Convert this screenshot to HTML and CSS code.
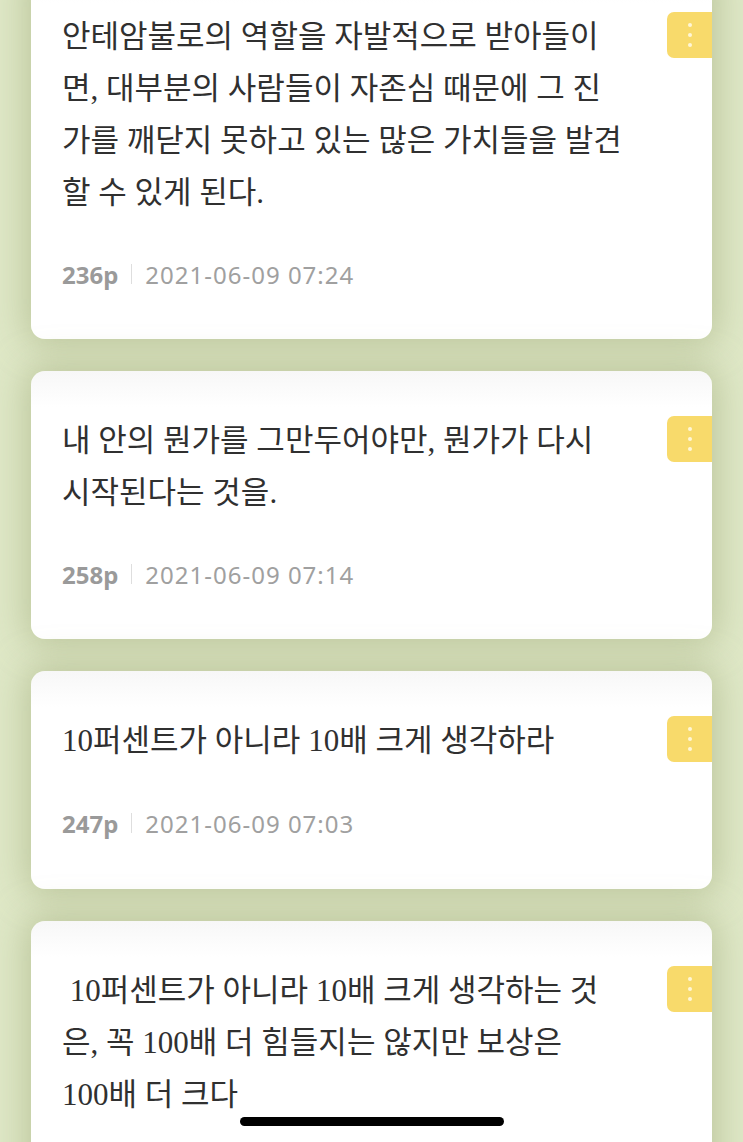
FILE: index.html
```html
<!DOCTYPE html>
<html lang="ko">
<head>
<meta charset="utf-8">
<title>밑줄 목록</title>
<link rel="stylesheet" href="styles.css">
</head>
<body>
<main class="list">
  <article class="card">
    <p class="quote">안테암불로의 역할을 자발적으로 받아들이면, 대부분의 사람들이 자존심 때문에 그 진가를 깨닫지 못하고 있는 많은 가치들을 발견할 수 있게 된다.</p>
    <div class="meta"><span class="page">236p</span><span class="sep"></span><span class="date">2021-06-09 07:24</span></div>
    <button class="more" aria-label="더보기"><i></i><i></i><i></i></button>
  </article>
  <article class="card">
    <p class="quote">내 안의 뭔가를 그만두어야만, 뭔가가 다시 시작된다는 것을.</p>
    <div class="meta"><span class="page">258p</span><span class="sep"></span><span class="date">2021-06-09 07:14</span></div>
    <button class="more" aria-label="더보기"><i></i><i></i><i></i></button>
  </article>
  <article class="card card-single">
    <p class="quote">10퍼센트가 아니라 10배 크게 생각하라</p>
    <div class="meta"><span class="page">247p</span><span class="sep"></span><span class="date">2021-06-09 07:03</span></div>
    <button class="more" aria-label="더보기"><i></i><i></i><i></i></button>
  </article>
  <article class="card card-last">
    <p class="quote">&nbsp;10퍼센트가 아니라 10배 크게 생각하는 것은, 꼭 100배 더 힘들지는 않지만 보상은 <span class="word">100배</span> 더 크다</p>
    <button class="more" aria-label="더보기"><i></i><i></i><i></i></button>
  </article>
</main>
<div class="home-indicator"></div>
</body>
</html>
```
FILE: styles.css
```css
html, body {
  margin: 0;
  padding: 0;
}
body {
  background: #dfe8c7;
  height: 1142px;
  overflow: hidden;
}
.list {
  display: flex;
  flex-direction: column;
  gap: 32px;
  padding: 0 31px;
  margin-top: -33px;
}
.card {
  position: relative;
  background: linear-gradient(#f7f7f7, #ffffff 36px);
  border-radius: 14px;
  padding: 44px 89.5px 50px 31px;
  box-shadow: 0 0 34px 6px rgba(160, 172, 122, 0.55);
}
.card-single {
  padding-bottom: 51px;
}
.card-last {
  padding-bottom: 120px;
}
.quote {
  margin: 0;
  font-family: "Liberation Serif", "Noto Sans CJK KR", serif;
  font-size: 31px;
  line-height: 52px;
  color: #303030;
  word-break: normal;
}
.word {
  white-space: nowrap;
}
.meta {
  margin-top: 40px;
  display: flex;
  align-items: center;
  height: 30px;
  font-family: "Noto Sans", "Noto Sans CJK KR", sans-serif;
  font-size: 24px;
  color: #a0a0a0;
}
.card-single .meta {
  margin-top: 41px;
}
.page {
  font-weight: 700;
  color: #9a9a9a;
}
.sep {
  width: 1px;
  height: 20px;
  background: #dedede;
  margin: 0 13px;
}
.date {
  letter-spacing: 1px;
}
.more {
  position: absolute;
  top: 45px;
  right: 0;
  width: 45px;
  height: 46px;
  border: 0;
  padding: 0;
  border-radius: 7px 0 0 7px;
  background: #f8da6b;
  display: flex;
  flex-direction: column;
  align-items: center;
  justify-content: center;
  gap: 6px;
}
.more i {
  width: 4px;
  height: 4px;
  border-radius: 50%;
  background: #fff6d6;
}
.home-indicator {
  position: fixed;
  left: 240px;
  bottom: 16px;
  width: 264px;
  height: 9px;
  border-radius: 5px;
  background: #000;
}
```
